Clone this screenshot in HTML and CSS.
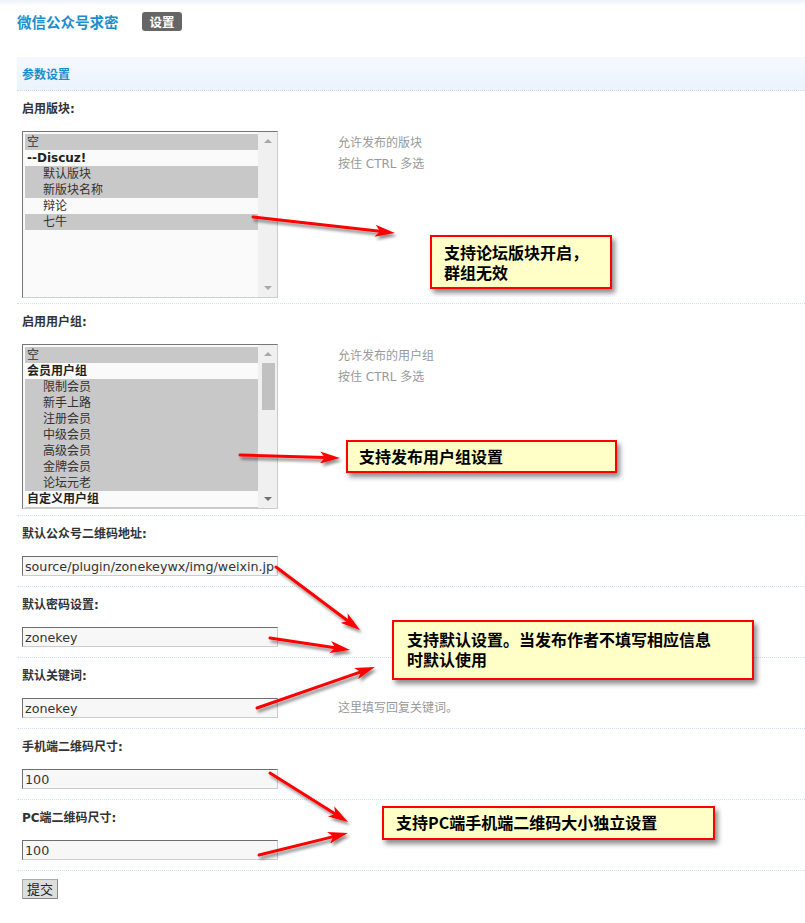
FILE: index.html
```html
<!DOCTYPE html>
<html lang="zh-CN">
<head>
    <meta charset="UTF-8">
    <meta name="viewport" content="width=device-width, initial-scale=1.0">
    <title>微信公众号求密 - 设置</title>
    <link rel="stylesheet" href="styles.css">
</head>
<body>
    <div class="page">
        <div class="top">
            <span class="plugin-name">微信公众号求密</span>
            <span class="badge">设置</span>
        </div>

        <div class="panel">
            <div class="panel-head">参数设置</div>

            <div class="row row-list">
                <div class="label">启用版块:</div>
                <div class="field">
                    <div class="listbox listbox-forums">
                        <div class="opts">
                            <div class="opt sel">空</div>
                            <div class="opt group">--Discuz!</div>
                            <div class="opt sub sel">默认版块</div>
                            <div class="opt sub sel">新版块名称</div>
                            <div class="opt sub">辩论</div>
                            <div class="opt sub sel">七牛</div>
                        </div>
                        <div class="scroll">
                            <span class="arrow-up"></span>
                            <span class="track"></span>
                            <span class="arrow-down"></span>
                        </div>
                    </div>
                    <div class="tips">允许发布的版块<br>按住 CTRL 多选</div>
                </div>
            </div>

            <div class="row row-list2">
                <div class="label">启用用户组:</div>
                <div class="field">
                    <div class="listbox listbox-groups">
                        <div class="opts">
                            <div class="opt sel">空</div>
                            <div class="opt group">会员用户组</div>
                            <div class="opt sub sel">限制会员</div>
                            <div class="opt sub sel">新手上路</div>
                            <div class="opt sub sel">注册会员</div>
                            <div class="opt sub sel">中级会员</div>
                            <div class="opt sub sel">高级会员</div>
                            <div class="opt sub sel">金牌会员</div>
                            <div class="opt sub sel">论坛元老</div>
                            <div class="opt group">自定义用户组</div>
                            <div class="opt sub sel"></div>
                        </div>
                        <div class="scroll">
                            <span class="arrow-up"></span>
                            <span class="track"><span class="thumb"></span></span>
                            <span class="arrow-down"></span>
                        </div>
                    </div>
                    <div class="tips">允许发布的用户组<br>按住 CTRL 多选</div>
                </div>
            </div>

            <div class="row">
                <div class="label">默认公众号二维码地址:</div>
                <div class="field">
                    <input class="text" type="text" value="source/plugin/zonekeywx/img/weixin.jpg">
                </div>
            </div>

            <div class="row">
                <div class="label">默认密码设置:</div>
                <div class="field">
                    <input class="text" type="text" value="zonekey">
                </div>
            </div>

            <div class="row">
                <div class="label">默认关键词:</div>
                <div class="field">
                    <input class="text" type="text" value="zonekey">
                    <div class="tips">这里填写回复关键词。</div>
                </div>
            </div>

            <div class="row">
                <div class="label">手机端二维码尺寸:</div>
                <div class="field">
                    <input class="text" type="text" value="100">
                </div>
            </div>

            <div class="row">
                <div class="label">PC端二维码尺寸:</div>
                <div class="field">
                    <input class="text" type="text" value="100">
                </div>
            </div>

            <div class="submit-row">
                <button class="btn" type="submit">提交</button>
            </div>
        </div>

        <!-- annotations -->
        <svg class="arrows" width="805" height="923" viewBox="0 0 805 923">
            <defs>
                <filter id="shade" x="-20%" y="-20%" width="140%" height="160%">
                    <feDropShadow dx="2" dy="3" stdDeviation="1.6" flood-color="#000" flood-opacity="0.45"/>
                </filter>
                <marker id="head" viewBox="0 0 20 12" refX="5" refY="6" markerUnits="userSpaceOnUse" markerWidth="20" markerHeight="12" orient="auto">
                    <path d="M0,0 L20,6 L0,12 L5,6 Z" fill="#f00"/>
                </marker>
            </defs>
            <g stroke="#f00" stroke-width="3" stroke-linecap="round" filter="url(#shade)" marker-end="url(#head)">
                <line x1="253" y1="217" x2="380" y2="231.3"/>
                <line x1="240" y1="455" x2="325" y2="457.6"/>
                <line x1="276" y1="567" x2="348" y2="621"/>
                <line x1="270" y1="638" x2="335.2" y2="647.8"/>
                <line x1="257" y1="708" x2="360.8" y2="671.9"/>
                <line x1="270" y1="773" x2="335.3" y2="814"/>
                <line x1="259" y1="855" x2="333.4" y2="836.6"/>
            </g>
        </svg>

        <div class="note note-forums">支持论坛版块开启，<br>群组无效</div>
        <div class="note note-groups">支持发布用户组设置</div>
        <div class="note note-default">支持默认设置。当发布作者不填写相应信息<br>时默认使用</div>
        <div class="note note-size">支持PC端手机端二维码大小独立设置</div>
    </div>
</body>
</html>
```

FILE: styles.css
```css
body {
    margin: 0;
    background: #fff linear-gradient(#eef2f7, #fff 6px) no-repeat;
    font: 12px/1.5 Tahoma, "DejaVu Sans", "Noto Sans CJK SC", sans-serif;
    color: #333;
}
.page {
    position: relative;
    width: 805px;
    height: 923px;
    overflow: hidden;
}
.top {
    display: flex;
    align-items: center;
    height: 19px;
    padding: 12px 17px 26px;
}
.plugin-name {
    font-family: "Noto Sans CJK SC", sans-serif;
    font-size: 14.5px;
    font-weight: bold;
    color: #1b8fcb;
}
.badge {
    margin-left: 23px;
    height: 19px;
    line-height: 19px;
    padding: 0 7px 0 8px;
    border-radius: 3px;
    background: #666;
    color: #fff;
    font-family: "Noto Sans CJK SC", sans-serif;
    font-weight: bold;
    font-size: 12.5px;
}
.panel {
    margin-left: 17px;
}
.panel-head {
    height: 33px;
    line-height: 33px;
    padding-left: 5px;
    background: linear-gradient(#f5f9fd, #ebf3fb);
    border-bottom: 1px dotted #d0d8e0;
    color: #1b8fcb;
    font-weight: bold;
    font-family: "Noto Sans CJK SC", sans-serif;
}
.row {
    padding: 8px 5px 10px;
    border-bottom: 1px dotted #d5e0ea;
}
.row-list {
    padding-bottom: 5px;
}
.row-list2 {
    padding-bottom: 6px;
}
.label {
    line-height: 20px;
    font-weight: bold;
    color: #333;
}
.field {
    display: flex;
    align-items: flex-start;
    margin-top: 12px;
}
.tips {
    margin-left: 60px;
    padding-top: 2px;
    line-height: 21px;
    color: #999;
}

/* list boxes */
.listbox {
    display: flex;
    width: 254px;
    border: 1px solid #ccc;
    border-top-color: #777;
    border-left-color: #777;
    background: #fafafa;
}
.listbox-forums {
    height: 165px;
}
.listbox-groups {
    height: 163px;
}
.opts {
    flex: 1;
    overflow: hidden;
    padding: 2px 0 0 2px;
}
.opt {
    height: 16px;
    line-height: 16px;
    padding-left: 2px;
    color: #333;
    white-space: nowrap;
}
.opt.sel {
    background: #c8c8c8;
}
.opt.sub {
    padding-left: 18px;
}
.opt.group {
    font-weight: bold;
    color: #222;
}
.scroll {
    display: flex;
    flex-direction: column;
    width: 19px;
    background: #f0f0f0;
}
.arrow-up,
.arrow-down {
    position: relative;
    height: 17px;
}
.arrow-up::after,
.arrow-down::after {
    content: "";
    position: absolute;
    left: 6px;
    top: 7px;
    border-left: 4px solid transparent;
    border-right: 4px solid transparent;
}
.arrow-up::after {
    border-bottom: 4px solid #a8a8a8;
}
.arrow-down::after {
    top: 6px;
    border-top: 4px solid #707070;
}
.listbox-forums .arrow-down::after {
    border-top-color: #a8a8a8;
}
.track {
    flex: 1;
    padding: 1px 2px 0 4px;
}
.thumb {
    display: block;
    height: 47px;
    background: #c1c1c1;
}

/* inputs */
.text {
    box-sizing: border-box;
    width: 256px;
    height: 20px;
    margin: 0;
    padding: 0 2px;
    border: 1px solid #ccc;
    border-top-color: #6e6e6e;
    border-left-color: #6e6e6e;
    background: #f7f7f7;
    font: 12.7px "DejaVu Sans", sans-serif;
    color: #333;
    outline: none;
}
.field .text + .tips {
    padding-top: 0;
    line-height: 20px;
}
.submit-row {
    padding: 8px 5px;
}
.btn {
    height: 20px;
    padding: 0 4px;
    border: 1px solid #888;
    border-top-color: #aaa;
    border-left-color: #aaa;
    background: #ddd;
    font: 13px "Noto Sans CJK SC", sans-serif;
    color: #222;
    line-height: 18px;
}

/* annotation overlay */
.arrows {
    position: absolute;
    left: 0;
    top: 0;
    pointer-events: none;
}
.note {
    position: absolute;
    border: 2px solid #f00;
    background: #ffffc8;
    box-shadow: 3px 4px 5px rgba(0, 0, 0, 0.45);
    color: #000;
    font: bold 16px/20px "Noto Sans CJK SC", sans-serif;
    padding: 4px 10px 5px;
    white-space: nowrap;
}
.note-forums {
    left: 430px;
    top: 235px;
    width: 156px;
    padding: 5px 10px 5px 12px;
}
.note-groups {
    left: 346px;
    top: 440px;
    width: 246px;
    padding-left: 11px;
}
.note-default {
    left: 392px;
    top: 620px;
    width: 333px;
    padding: 7px 12px 9px 13px;
}
.note-size {
    left: 382px;
    top: 806px;
    width: 307px;
    padding: 4px 10px 6px 12px;
}
```
